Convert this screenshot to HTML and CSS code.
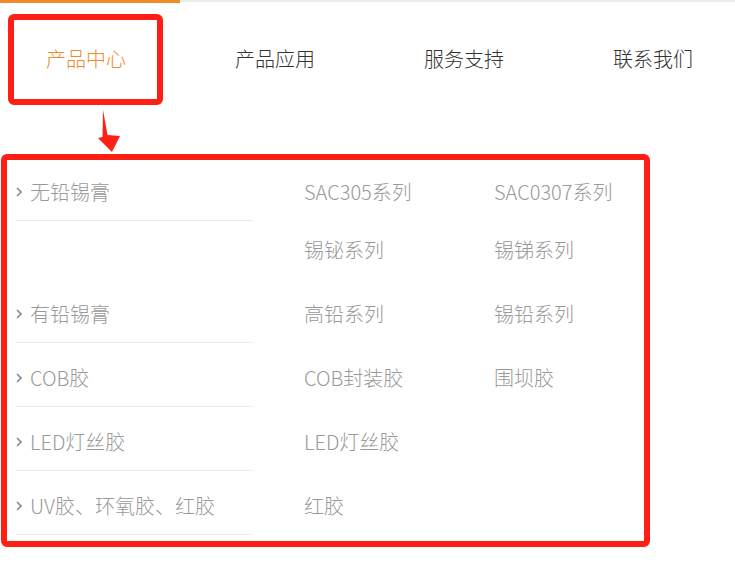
FILE: index.html
```html
<!DOCTYPE html>
<html lang="zh-CN">
<head>
<meta charset="utf-8">
<title>产品中心</title>
<link rel="stylesheet" href="styles.css">
</head>
<body>
<div class="page">
  <div class="topline"><span class="topline-active"></span><span class="topline-rest"></span></div>
  <nav class="nav">
    <a class="nav-item is-active">产品中心</a>
    <a class="nav-item">产品应用</a>
    <a class="nav-item">服务支持</a>
    <a class="nav-item">联系我们</a>
  </nav>
  <div class="menu">
    <div class="cat">
      <div class="cat-title"><svg class="chev" viewBox="0 0 6 10"><polyline points="1,1 5,5 1,9" fill="none" stroke="#8a8a8a" stroke-width="1.6"/></svg>无铅锡膏</div>
      <div class="subs"><span>SAC305系列</span><span>SAC0307系列</span><span>锡铋系列</span><span>锡锑系列</span></div>
    </div>
    <div class="cat">
      <div class="cat-title"><svg class="chev" viewBox="0 0 6 10"><polyline points="1,1 5,5 1,9" fill="none" stroke="#8a8a8a" stroke-width="1.6"/></svg>有铅锡膏</div>
      <div class="subs"><span>高铅系列</span><span>锡铅系列</span></div>
    </div>
    <div class="cat">
      <div class="cat-title"><svg class="chev" viewBox="0 0 6 10"><polyline points="1,1 5,5 1,9" fill="none" stroke="#8a8a8a" stroke-width="1.6"/></svg>COB胶</div>
      <div class="subs"><span>COB封装胶</span><span>围坝胶</span></div>
    </div>
    <div class="cat">
      <div class="cat-title"><svg class="chev" viewBox="0 0 6 10"><polyline points="1,1 5,5 1,9" fill="none" stroke="#8a8a8a" stroke-width="1.6"/></svg>LED灯丝胶</div>
      <div class="subs"><span>LED灯丝胶</span></div>
    </div>
    <div class="cat">
      <div class="cat-title"><svg class="chev" viewBox="0 0 6 10"><polyline points="1,1 5,5 1,9" fill="none" stroke="#8a8a8a" stroke-width="1.6"/></svg>UV胶、环氧胶、红胶</div>
      <div class="subs"><span>红胶</span></div>
    </div>
  </div>

  <div class="mark mark-nav"></div>
  <div class="mark mark-menu"></div>
  <svg class="mark-arrow" viewBox="0 0 735 574" width="735" height="574">
    <polygon points="103,110 107.5,135 120,136 112,152 98,138 102.5,137" fill="#ff1f14"/>
  </svg>
</div>
</body>
</html>
```
FILE: styles.css
```css
* { box-sizing: border-box; }
html, body { margin: 0; padding: 0; background: #fff; }
body {
  font-family: "Noto Sans CJK SC", "Noto Sans", sans-serif;
  font-weight: 300;
  width: 735px;
  height: 574px;
  overflow: hidden;
}
.page { position: relative; width: 735px; height: 574px; }

.topline { display: flex; height: 3px; }
.topline-active { width: 180px; background: #f08a2a; }
.topline-rest { flex: 1; border-top: 2px solid #ebebeb; }

.nav {
  display: flex;
  gap: 109px;
  padding: 42px 0 84px 46px;
}
.nav-item {
  font-size: 20px;
  line-height: 28px;
  color: #333;
  white-space: nowrap;
}
.nav-item.is-active { color: #f08a2a; }

.menu { padding-left: 16px; }
.cat { display: flex; align-items: flex-start; }
.cat-title {
  width: 237px;
  padding-top: 6px;
  height: 64px;
  line-height: 57px;
  border-bottom: 1px solid #ececec;
  font-size: 20px;
  color: #999;
  display: flex;
  align-items: center;
  white-space: nowrap;
}
.chev { width: 6px; height: 10px; margin-right: 8px; flex: none; }
.subs {
  margin-left: 51px;
  padding-top: 6px;
  display: grid;
  grid-template-columns: 190px 190px;
  grid-auto-rows: 58px;
  line-height: 58px;
  font-size: 20px;
  color: #999;
  white-space: nowrap;
}

.mark {
  position: absolute;
  border: 6px solid #ff1f14;
  border-radius: 6px;
}
.mark-nav { left: 8px; top: 14px; width: 155px; height: 91px; }
.mark-menu { left: 1px; top: 154px; width: 649px; height: 393px; }
.mark-arrow { position: absolute; left: 0; top: 0; pointer-events: none; }
```
